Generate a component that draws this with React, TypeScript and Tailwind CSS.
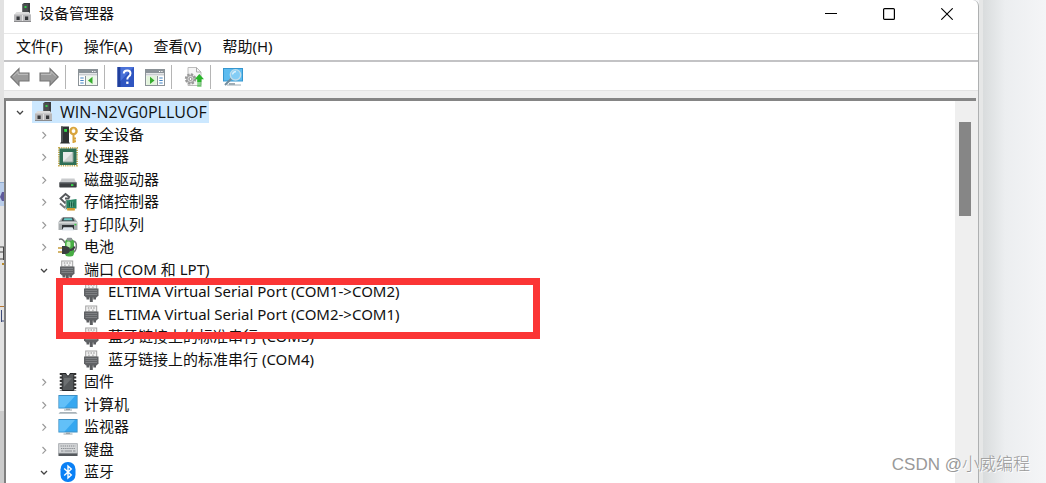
import type { ReactNode } from "react";

function Svg({ children, className = "h-5 w-5" }: { children: ReactNode; className?: string }) {
  return (
    <svg viewBox="0 0 20 20" className={`block shrink-0 ${className}`} fill="none" aria-hidden="true">
      {children}
    </svg>
  );
}

function HostIcon() {
  return (
    <Svg>
      <path d="M9.5 1 L11 0 H17 V11 H9.5 Z" fill="#3b3d3f" />
      <path d="M9.5 1 H15 V11 H9.5 Z" fill="#4b4e50" />
      <rect x="11.5" y="3" width="2" height="2" fill="#35d04a" />
      <path d="M1 12 L3.5 9 H16 L18 12 Z" fill="#dcdcdc" />
      <rect x="1" y="11.5" width="17" height="7.5" fill="#b9b9bb" />
      <path d="M1 18.5H18" stroke="#8b8b8d" />
      <rect x="3.5" y="13.5" width="3.2" height="3.5" fill="#35373a" />
      <rect x="12" y="13.5" width="3.2" height="3.5" fill="#35373a" />
      <path d="M9.5 12V18" stroke="#e3e3e3" />
    </Svg>
  );
}

function SecurityIcon() {
  return (
    <Svg>
      <path d="M3 1.5 H11 V17 L12 18.5 H2 L3 17 Z" fill="#2f3234" />
      <path d="M3 1.5H5V17H3Z" fill="#4d5154" />
      <rect x="6.2" y="4" width="2.8" height="2.8" fill="#35e04b" />
      <circle cx="15.5" cy="6" r="3.1" stroke="#d8a43d" strokeWidth="2.4" fill="#fff" />
      <path d="M15.5 9V18M15.5 13.5H18M15.5 16.3H18" stroke="#d8a43d" strokeWidth="2" />
      <path d="M14 4.5Q15 3.5 16.5 3.7" stroke="#f4d58b" />
    </Svg>
  );
}

function CpuIcon() {
  return (
    <Svg>
      <rect x="1" y="1" width="18" height="17.5" stroke="#c8ad54" strokeWidth="2" strokeDasharray="1.2 1" />
      <rect x="1.5" y="1.5" width="17" height="16.5" fill="#2f6f56" />
      <rect x="5" y="5" width="10" height="10" fill="#cfd3d1" />
      <path d="M5 15V5H15Z" fill="#e9ebea" />
      <path d="M15 5V15H5" stroke="#8fa69c" />
    </Svg>
  );
}

function DiskIcon() {
  return (
    <Svg>
      <path d="M4 8 H16 L18.5 13 H1.5 Z" fill="#c9cbcd" />
      <path d="M4 8H16L16.5 9H3.5Z" fill="#e4e5e6" />
      <rect x="1.3" y="12.3" width="17.4" height="5.2" rx="0.8" fill="#3c3f42" />
      <path d="M1.5 12.8H18.5" stroke="#777b7f" />
      <rect x="13" y="14.2" width="2.4" height="1.8" fill="#37dc4c" />
    </Svg>
  );
}

function StorageIcon() {
  return (
    <Svg>
      <path d="M12 5.5L7.5 2L2.5 6.5L7 11L9.5 8.5M7 6.5H11.5" stroke="#55585b" strokeWidth="1.9" />
      <path d="M2 11.5L6.5 15.5L9 13.2" stroke="#74777a" strokeWidth="1.8" />
      <path d="M8 8.5L18.5 7V16.5L8 17Z" fill="#278362" />
      <path d="M8 8.5V18" stroke="#a5b5ae" />
      <rect x="11" y="10.5" width="5" height="4" fill="#165c43" />
      <path d="M12.5 9.5V15.3M14.7 9.5V15.3" stroke="#80c7aa" strokeWidth=".7" />
      <path d="M9 16H17V18.5H9Z" fill="#dfa83d" />
      <path d="M11 16V18.5M13 16V18.5M15 16V18.5" stroke="#a87822" strokeWidth=".6" />
    </Svg>
  );
}

function PrinterIcon() {
  return (
    <Svg>
      <path d="M4 2.5H16L19.5 7V15H.5V7Z" fill="#a7acae" />
      <path d="M5 2.5H15L16.5 6H3.5Z" fill="#42484c" />
      <path d="M6.3 3.2H13.7L14.5 5.2H5.5Z" fill="#65c9c4" />
      <path d="M.8 7H19.2V8.5H.8Z" fill="#d8dadb" />
      <path d="M4 10H16V14.5H4Z" fill="#303438" />
      <path d="M5.5 12.3H14.5L16 15.5H4Z" fill="#dfe6ec" />
      <rect x="16.5" y="8.8" width="1.8" height="1.5" fill="#36cf46" />
    </Svg>
  );
}

function BatteryIcon() {
  return (
    <Svg>
      <path d="M14 4.5Q19 3.5 18.3 10Q18 14.5 14 16" stroke="#74777a" strokeWidth="1.6" />
      <rect x="7" y="2" width="9" height="17.500" rx="3.5" fill="#47ad44" />
      <rect x="8.7" y=".8" width="5.5" height="3" rx="1.2" fill="#8d9496" />
      <rect x="8.5" y="4.5" width="4" height="6" rx="1.5" fill="#b9ecb0" />
      <path d="M1 2.5Q5 .8 7 6" stroke="#6d7073" strokeWidth="1.5" />
      <path d="M0 11H5M0 15H5" stroke="#c59d3d" strokeWidth="1.5" />
      <path d="M4 9H7.5Q12 9.5 12 13Q12 16.5 7.5 17H4Z" fill="#3b3e40" />
      <path d="M12 13Q15.5 13 16.5 9.5" stroke="#3b3e40" strokeWidth="2" />
    </Svg>
  );
}

function PortIcon() {
  return (
    <Svg>
      <rect x="3.7" y="1" width="11" height="6" fill="#f2f2f2" stroke="#a3a3a3" />
      <path d="M5.8 3H7.300M8.5 3H10M11.2 3H12.700M6.3 5.2H7.600M10.3 5.2H11.600" stroke="#888" />
      <path d="M2 6.500H16.500V13.500L14.500 15.5H4L2 13.500Z" fill="#606265" />
      <path d="M3.500 8.500H15M3.500 10.500H15M3.500 12.500H15" stroke="#85878a" strokeWidth=".8" />
      <path d="M4.500 15H7.300V17.500H4.500ZM7.800 15H10.800V20H7.800ZM11.300 15H14V17.500H11.300Z" fill="#5b5d60" />
    </Svg>
  );
}

function FirmwareIcon() {
  return (
    <Svg>
      <path d="M3 1V19M17 1V19" stroke="#333" strokeWidth="2.5" strokeDasharray="2 1.5" />
      <path d="M4.2 1.5H8Q8 4 10 4Q12 4 12 1.5H15.8V18.5H4.2Z" fill="#55585a" stroke="#232527" />
      <path d="M6 6H14L6 15Z" fill="#6d7072" />
    </Svg>
  );
}

function ScreenIcon({ computer }: { computer?: boolean }) {
  return (
    <Svg>
      <rect x=".4" y={computer ? "0" : "2"} width="19.2" height="13.5" fill="#3d8fc4" />
      <rect x="1.2" y={computer ? "1" : "3"} width="17.6" height="11.5" fill="#35a7f0" />
      <path d={computer ? "M1.2 1H17L6.5 12.5H1.2Z" : "M1.2 3H17L6.5 14.500H1.2Z"} fill="#62c0f8" />
      <path d={computer ? "M8 13.500H12V14.500H14V15.500H6V14.500H8Z" : "M8 15.500H12V16.500H14.5V17.500H5.5V16.500H8Z"} fill="#9ba5ab" />
      {computer && <path d="M2 17H18L19.5 18.700H.5Z" fill="#a9b3b9" />}
    </Svg>
  );
}

function KeyboardIcon() {
  return (
    <Svg>
      <rect x=".5" y="3.500" width="19" height="12" fill="#d5d7d9" />
      <rect x=".5" y="13" width="19" height="3" fill="#55595d" />
      <rect x=".7" y="3.700" width="18.6" height="9.5" stroke="#a1a5a9" strokeWidth=".8" />
      <path d="M2.5 6H17.5M3 8.500H17.5" stroke="#85898e" strokeDasharray="1.3 .8" />
      <path d="M3 11H5.5M6.5 11H14M15 11H17.5" stroke="#85898e" />
    </Svg>
  );
}

function BluetoothIcon() {
  return (
    <Svg>
      <rect x="2.5" y="0" width="15" height="20" rx="7.2" fill="#0a80f5" />
      <path d="M6.2 6.5L13.3 13L10 16V4L13.3 7L6.2 13.5" stroke="#fff" strokeWidth="1.4" />
    </Svg>
  );
}

function ArrowIcon({ right }: { right?: boolean }) {
  return (
    <Svg>
      <path
        d={right ? "M19.2 10L11 1.7V6H1V14H11V18.3Z" : "M.8 10L9 1.7V6H19V14H9V18.3Z"}
        fill="#9a9a9a"
        stroke="#747474"
        strokeWidth="1.1"
      />
      <path d={right ? "M2 7.3H12V4.5L17 9.5" : "M18 7.3H8V4.5L3 9.5"} stroke="#c2c2c2" />
    </Svg>
  );
}

function PanelIcon({ flip }: { flip?: boolean }) {
  return (
    <Svg>
      <rect x=".5" y="2.5" width="19" height="16" fill="#fff" stroke="#8b9297" />
      <rect x="1" y="3" width="18" height="3.2" fill="#8a9298" />
      <path d="M14 4.5H15.2M16.3 4.5H17.5" stroke="#fff" />
      <path d="M1 7.7H19" stroke="#c9cdd0" strokeWidth="1.6" />
      {flip ? (
        <>
          <path d="M12.5 9V18" stroke="#8b9297" />
          <path d="M14.3 11H17.7M14.3 13.5H17.7M14.3 16H17.7" stroke="#4385c5" />
          <rect x="1.3" y="9" width="10.5" height="9" fill="#e2f3dc" />
          <path d="M5 9.8L9.5 13.4L5 17Z" fill="#36ad2d" />
        </>
      ) : (
        <>
          <path d="M7.5 9V18" stroke="#8b9297" />
          <path d="M2.3 11H5.7M2.3 13.5H5.7M2.3 16H5.7" stroke="#4385c5" />
          <rect x="8.2" y="9" width="10.5" height="9" fill="#edf7ea" />
          <path d="M14.5 9.8L10 13.4L14.5 17Z" fill="#36ad2d" />
        </>
      )}
    </Svg>
  );
}

function HelpIcon() {
  return (
    <Svg>
      <rect x="1.500" y="0" width="16.5" height="20" fill="#2f55c1" />
      <path d="M1.500 0H4.500V20H1.500Z" fill="#203f9c" />
      <path d="M4.500 0H18L4.500 14Z" fill="#4b72d8" />
      <path d="M7.800 6.5Q7.800 3.6 11.200 3.6Q14.500 3.6 14.500 6.5Q14.500 8.3 12.700 9.5Q11.300 10.5 11.300 12.6" stroke="#fff" strokeWidth="2" />
      <rect x="10.200" y="14.6" width="2.3" height="2.3" fill="#fff" />
    </Svg>
  );
}

function UpdateIcon() {
  return (
    <Svg>
      <path d="M4 .5H12.5L17 5V18.5H4Z" fill="#f5f5f5" stroke="#bcbcbc" />
      <path d="M12.5 .5V5H17" stroke="#aaa" />
      <circle cx="6.500" cy="12" r="4.5" fill="#d5d5d5" stroke="#999" strokeWidth="2.4" strokeDasharray="2.2 1.3" />
      <circle cx="6.500" cy="12" r="3.6" fill="#d8d8d8" stroke="#999" />
      <circle cx="6.500" cy="12" r="1.5" fill="#fff" stroke="#8f8f8f" />
      <path d="M15.3 7L20 12.3H17.5V15.5H13.2V12.3H10.7Z" fill="#29b52a" />
      <path d="M13.2 17H17.5M13.2 19H17.5" stroke="#29b52a" strokeWidth="1.2" />
    </Svg>
  );
}

function ScanIcon() {
  return (
    <Svg>
      <rect x="0" y="1" width="20" height="13.5" fill="#3596cf" />
      <rect x="1" y="2" width="18" height="11.5" fill="#5dbcf0" />
      <path d="M6 16H12V18H6Z" fill="#9eacb5" />
      <path d="M4 18H18" stroke="#9eacb5" />
      <path d="M8.8 11.3L2 18" stroke="#6f8c9e" strokeWidth="2" />
      <circle cx="12.5" cy="7.8" r="5.2" fill="#84cdf5" stroke="#c0dcea" strokeWidth="1.4" />
      <path d="M9.5 7.5Q10 4.7 13 4.5" stroke="#d7f0fc" strokeWidth="1.3" />
    </Svg>
  );
}

function Chevron({ open }: { open: boolean }) {
  return (
    <svg viewBox="0 0 16 16" className="block h-4 w-4" fill="none" aria-hidden="true">
      {open ? (
        <path d="M5 7L8 10L11 7" stroke="#444" strokeWidth="1.3" />
      ) : (
        <path d="M6.5 5L9.7 8.3L6.5 11.6" stroke="#9a9a9a" strokeWidth="1.2" />
      )}
    </svg>
  );
}

type Node = { label: string; level: 0 | 1 | 2; icon: ReactNode; open?: boolean };

const nodes: Node[] = [
  { label: "WIN-N2VG0PLLUOF", level: 0, icon: <HostIcon />, open: true },
  { label: "安全设备", level: 1, icon: <SecurityIcon /> },
  { label: "处理器", level: 1, icon: <CpuIcon /> },
  { label: "磁盘驱动器", level: 1, icon: <DiskIcon /> },
  { label: "存储控制器", level: 1, icon: <StorageIcon /> },
  { label: "打印队列", level: 1, icon: <PrinterIcon /> },
  { label: "电池", level: 1, icon: <BatteryIcon /> },
  { label: "端口 (COM 和 LPT)", level: 1, icon: <PortIcon />, open: true },
  { label: "ELTIMA Virtual Serial Port (COM1->COM2)", level: 2, icon: <PortIcon /> },
  { label: "ELTIMA Virtual Serial Port (COM2->COM1)", level: 2, icon: <PortIcon /> },
  { label: "蓝牙链接上的标准串行 (COM3)", level: 2, icon: <PortIcon /> },
  { label: "蓝牙链接上的标准串行 (COM4)", level: 2, icon: <PortIcon /> },
  { label: "固件", level: 1, icon: <FirmwareIcon /> },
  { label: "计算机", level: 1, icon: <ScreenIcon computer /> },
  { label: "监视器", level: 1, icon: <ScreenIcon /> },
  { label: "键盘", level: 1, icon: <KeyboardIcon /> },
  { label: "蓝牙", level: 1, icon: <BluetoothIcon />, open: true },
];

const indents = ["pl-[6px]", "pl-[30px]", "pl-[54px]"];

function TreeRow({ node }: { node: Node }) {
  const root = node.level === 0;
  return (
    <li className={`flex items-center odd:h-[22px] even:h-[23px] ${indents[node.level]}`}>
      {node.level === 2 ? (
        <span className="w-4" />
      ) : (
        <button className="w-4" aria-label={`${node.open ? "折叠" : "展开"} ${node.label}`}>
          <Chevron open={!!node.open} />
        </button>
      )}
      <button
        className={`ml-1 flex h-full items-center gap-[6px] pl-[2px] ${
          root ? "bg-[#cce8ff] pr-[2px] font-['Open_Sans','Noto_Sans_CJK_SC',sans-serif] text-[16px]" : "pr-1"
        }`}
      >
        {node.icon}
        <span className={`leading-[22px] ${root ? "" : "pb-[2px]"}`}>{node.label}</span>
      </button>
    </li>
  );
}

function ToolButton({ label, children }: { label: string; children: ReactNode }) {
  return (
    <button aria-label={label} className="shrink-0">
      {children}
    </button>
  );
}

function Separator() {
  return <span className="h-6 w-px shrink-0 bg-[#b5b5b5]" />;
}

export default function App() {
  return (
    <div className="relative flex min-h-screen overflow-hidden bg-[#f3f4f6] font-['Noto_Sans','Noto_Sans_CJK_SC',sans-serif] text-[15px] whitespace-nowrap text-[#111]">
      <div className="w-1 shrink-0 bg-[#e2e2e2]">
        <svg viewBox="0 0 4 483" className="block h-[483px] w-1" aria-hidden="true">
          <rect y="182" width="4" height="24" fill="#b9cdea" />
          <path d="M0 182.5H4" stroke="#8fabd0" />
          <path d="M2 192H4V201H2L0 197Z" fill="#5f5a9c" />
          <path d="M0 247H4M3.5 247V260M0 252H3M0 259H3" stroke="#444" />
          <rect x="2" y="263" width="2" height="2" fill="#b98b2c" />
          <path d="M0 306.5H4" stroke="#b97834" />
          <path d="M1.5 310V322M1.5 321H4" stroke="#3d4a78" />
          <rect y="411" width="4" height="72" fill="#cbcbcb" />
        </svg>
      </div>

      <main className="flex min-w-0 flex-1 flex-col rounded-tr-md border-r border-[#aeb0b1] bg-white">
        <header className="flex h-[34px] items-start border-b border-[#e8e8e8] pr-[2px]">
          <div className="flex h-[26px] flex-1 items-center gap-[6px] pl-[9px]">
            <HostIcon />
            <h1>设备管理器</h1>
          </div>
          <button aria-label="最小化" className="flex h-7 w-[58px] items-center justify-center">
            <svg viewBox="0 0 12 12" className="h-3 w-3" aria-hidden="true">
              <path d="M0 5.5H12" stroke="#000" />
            </svg>
          </button>
          <button aria-label="最大化" className="flex h-7 w-[58px] items-center justify-center">
            <svg viewBox="0 0 12 12" className="h-3 w-3" fill="none" aria-hidden="true">
              <rect x=".6" y=".6" width="10.8" height="10.8" rx="1" stroke="#000" strokeWidth="1.2" />
            </svg>
          </button>
          <button aria-label="关闭" className="flex h-7 w-[58px] items-center justify-center">
            <svg viewBox="0 0 12 12" className="h-3 w-3" aria-hidden="true">
              <path d="M.3 .3L11.7 11.7M11.7 .3L.3 11.7" stroke="#000" strokeWidth="1.1" />
            </svg>
          </button>
        </header>

        <nav className="flex h-7 items-center gap-[21px] border-b-2 border-[#c3c3c5] pb-[2px] pl-3">
          <button>文件(F)</button>
          <button>操作(A)</button>
          <button>查看(V)</button>
          <button>帮助(H)</button>
        </nav>

        <div className="flex h-[29px] items-center border-b border-[#e3e3e3] pt-[2px] pl-[6px]">
          <div className="flex gap-[9px] pr-[6px]">
            <ToolButton label="后退"><ArrowIcon /></ToolButton>
            <ToolButton label="前进"><ArrowIcon right /></ToolButton>
          </div>
          <Separator />
          <div className="flex pr-[6px] pl-3">
            <ToolButton label="显示控制台树"><PanelIcon /></ToolButton>
          </div>
          <Separator />
          <div className="flex gap-[9px] pr-[6px] pl-[11px]">
            <ToolButton label="帮助主题"><HelpIcon /></ToolButton>
            <ToolButton label="显示操作窗格"><PanelIcon flip /></ToolButton>
          </div>
          <Separator />
          <div className="flex pr-[6px] pl-3">
            <ToolButton label="更新驱动程序"><UpdateIcon /></ToolButton>
          </div>
          <Separator />
          <div className="flex pl-3">
            <ToolButton label="扫描检测硬件改动"><ScanIcon /></ToolButton>
          </div>
        </div>

        <div className="flex flex-1 flex-col bg-[#efefef] pt-[7px] pr-[2px]">
          <div className="relative flex flex-1 border-t-[3px] border-l-2 border-t-[#858585] border-l-[#808080] bg-white">
            <ul className="flex-1">
              {nodes.map((node) => (
                <TreeRow key={node.label} node={node} />
              ))}
            </ul>
            <div className="w-[21px] bg-[#efefef] px-1 pt-[21px]">
              <div className="h-[94px] w-3 bg-[#868686]" />
            </div>
            <div className="pointer-events-none absolute top-[177px] left-[50px] h-[61px] w-[484px] border-[7px] border-[#fb3535]" />
          </div>
        </div>
      </main>

      <aside className="flex w-[67px] shrink-0">
        <div className="w-1 bg-[#e6e7e7]" />
        <div className="flex-1 bg-linear-to-r from-[#d9dcdd] via-[#eceef0] via-35% to-[#f4f5f7]" />
      </aside>

      <p className="absolute right-4 bottom-[6px] font-['Liberation_Sans','Noto_Sans_CJK_SC',sans-serif] text-[17px] leading-6 font-light text-[#999] [text-shadow:1px_1px_0_#ffffff]">
        CSDN @小威编程
      </p>
    </div>
  );
}
